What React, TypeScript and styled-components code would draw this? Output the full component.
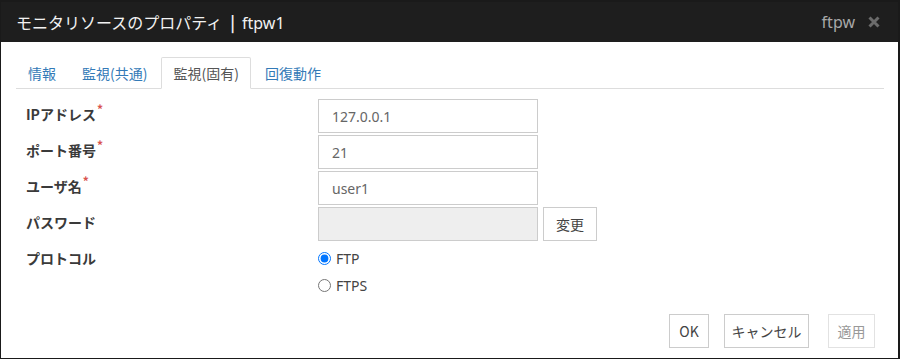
import React from "react";
import styled, { createGlobalStyle } from "styled-components";

const GlobalStyle = createGlobalStyle`
  html, body {
    margin: 0;
    padding: 0;
    height: 100%;
    overflow: hidden;
    background: #151515;
  }
  #root {
    height: 100%;
  }
  * {
    box-sizing: border-box;
  }
`;

const FONT = `"Noto Sans", "Noto Sans CJK JP", sans-serif`;
const JP = `"Noto Sans CJK JP", sans-serif`;

type Field = { label: string; value: string; required?: boolean; disabled?: boolean; action?: string };

const fields: Field[] = [
  { label: "IPアドレス", value: "127.0.0.1", required: true },
  { label: "ポート番号", value: "21", required: true },
  { label: "ユーザ名", value: "user1", required: true },
  { label: "パスワード", value: "", disabled: true, action: "変更" },
];

const tabs = ["情報", "監視(共通)", "監視(固有)", "回復動作"];

export default function App() {
  return (
    <>
      <GlobalStyle />
      <Dialog>
        <Header>
          <Title>
            モニタリソースのプロパティ<Sep>|</Sep>
            <Latin>ftpw1</Latin>
          </Title>
          <HeaderRight>
            <TypeName>ftpw</TypeName>
            <svg width="12" height="12" viewBox="0 0 12 12">
              <path d="M1.5 1.5 L10.5 10.5 M10.5 1.5 L1.5 10.5" stroke="#6b6b6b" strokeWidth="3" strokeLinecap="butt" />
            </svg>
          </HeaderRight>
        </Header>

        <Body>
          <TabList>
            {tabs.map((t, i) => (
              <Tab key={t} active={i === 2}>
                {t}
              </Tab>
            ))}
          </TabList>

          <Form>
            {fields.map((f) => (
              <React.Fragment key={f.label}>
                <Label>
                  {f.label}
                  {f.required && <Required>*</Required>}
                </Label>
                <Control>
                  <Input value={f.value} disabled={f.disabled} readOnly />
                  {f.action && <Button w={54}>{f.action}</Button>}
                </Control>
              </React.Fragment>
            ))}
            <Label>プロトコル</Label>
            <RadioGroup>
              <RadioRow>
                <Radio type="radio" name="proto" defaultChecked />
                FTP
              </RadioRow>
              <RadioRow>
                <Radio type="radio" name="proto" />
                FTPS
              </RadioRow>
            </RadioGroup>
          </Form>
        </Body>

        <Footer>
          <Button w={40}>OK</Button>
          <Button w={85}>キャンセル</Button>
          <Button w={47} disabled style={{ marginLeft: 4 }}>
            適用
          </Button>
        </Footer>
      </Dialog>
    </>
  );
}

const Dialog = styled.div`
  height: 100vh;
  display: flex;
  flex-direction: column;
  background: #fff;
  border-style: solid;
  border-color: #1a1a1a;
  border-width: 2px 2px 1px 1px;
  font-family: ${FONT};
  overflow: hidden;
`;

const Header = styled.div`
  height: 40px;
  flex: none;
  background: #1e1e1e;
  display: flex;
  align-items: center;
  justify-content: space-between;
  padding: 0 18px 0 15px;
`;

const Title = styled.div`
  color: #f2f2f2;
  font-size: 16px;
  line-height: 20px;
  font-family: ${JP};
`;

const Sep = styled.span`
  margin: 0 7px 0 8px;
  font-weight: 700;
`;

const Latin = styled.span`
  font-family: ${FONT};
`;

const HeaderRight = styled.div`
  display: flex;
  align-items: center;
  gap: 13px;
`;

const TypeName = styled.span`
  color: #a8a8a8;
  font-size: 16px;
  line-height: 20px;
`;

const Body = styled.div`
  padding: 15px 14px 0 15px;
`;

const TabList = styled.div`
  display: flex;
  gap: 2px;
  border-bottom: 1px solid #ddd;
  height: 32px;
`;

const Tab = styled.div<{ active?: boolean }>`
  height: 32px;
  padding: 0 11px;
  display: flex;
  align-items: center;
  font-size: 14px;
  font-family: ${JP};
  color: ${(p) => (p.active ? "#555" : "#337ab7")};
  background: ${(p) => (p.active ? "#fff" : "transparent")};
  border: 1px solid ${(p) => (p.active ? "#ddd" : "transparent")};
  border-bottom-color: transparent;
  border-radius: 2px 2px 0 0;
`;

const Form = styled.div`
  margin-top: 10px;
  padding-left: 10px;
  display: grid;
  grid-template-columns: 292px 1fr;
  row-gap: 2px;
  align-items: center;
`;

const Label = styled.div`
  font-size: 14px;
  font-weight: 700;
  color: #3a3a3a;
  font-family: ${JP};
  align-self: start;
  line-height: 30px;
`;

const Required = styled.sup`
  color: #d9534f;
  font-size: 12px;
  margin-left: 1px;
  line-height: 0;
`;

const Control = styled.div`
  display: flex;
  gap: 5px;
`;

const Input = styled.input`
  width: 220px;
  height: 34px;
  border: 1px solid #ccc;
  padding: 0 13px;
  font-family: ${FONT};
  font-size: 14px;
  color: #666;
  background: #fff;
  outline: none;
  &:disabled {
    background: #eee;
  }
`;

const Button = styled.button<{ w: number }>`
  width: ${(p) => p.w}px;
  height: 34px;
  padding: 0;
  border: 1px solid #ccc;
  background: #fff;
  color: #444;
  font-family: ${JP};
  font-size: 14px;
  font-weight: 400;
  &:disabled {
    color: #999;
    border-color: #e2e2e2;
  }
`;

const RadioGroup = styled.div`
  display: flex;
  flex-direction: column;
  padding-top: 2px;
`;

const RadioRow = styled.label`
  display: flex;
  align-items: center;
  height: 27px;
  gap: 5px;
  font-size: 14px;
  font-weight: 400;
  color: #444;
`;

const Radio = styled.input`
  margin: 0;
  width: 13px;
  height: 13px;
`;

const Footer = styled.div`
  margin-top: auto;
  display: flex;
  justify-content: flex-end;
  gap: 15px;
  padding: 0 23px 10px 0;
`;
